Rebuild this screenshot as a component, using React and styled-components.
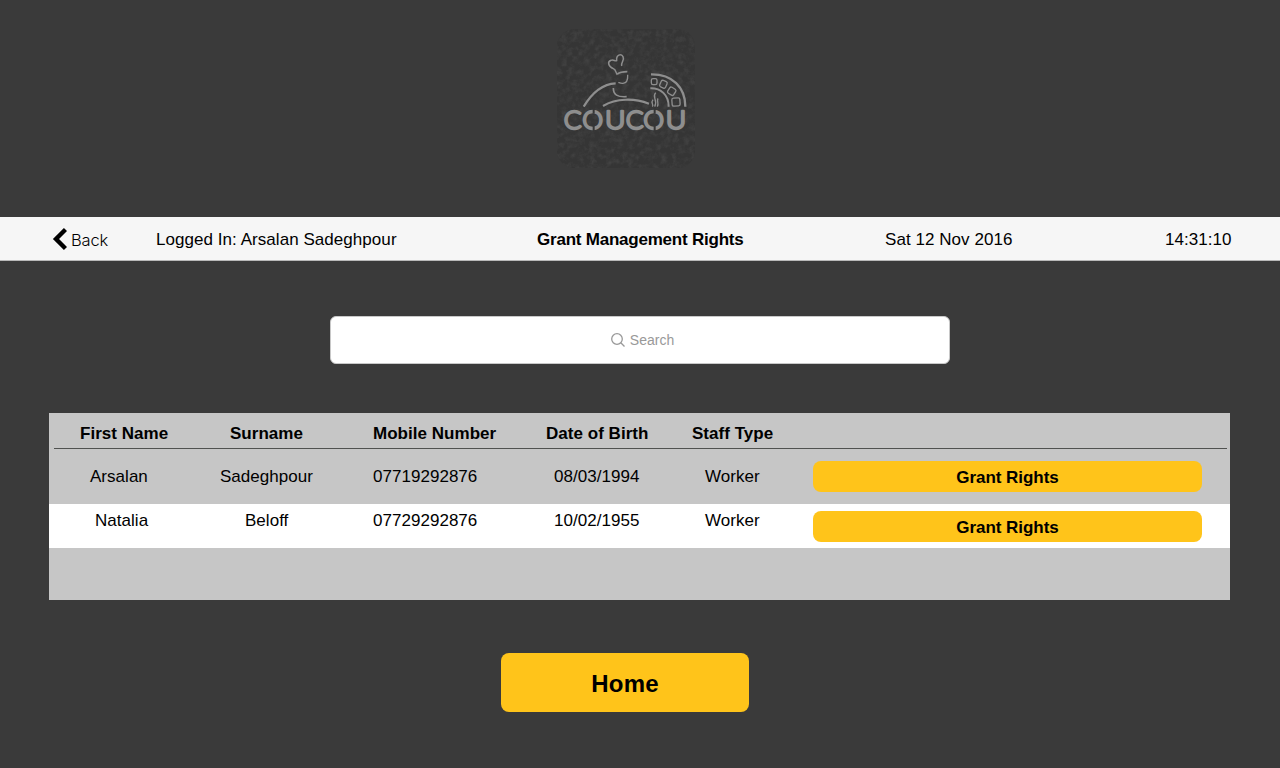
import React from "react";
import styled, { createGlobalStyle } from "styled-components";

const GlobalStyle = createGlobalStyle`
  body { margin: 0; background: #3a3a3a; }
  * { box-sizing: border-box; }
`;

const Page = styled.div`
  width: 1280px;
  height: 768px;
  overflow: hidden;
  display: flex;
  flex-direction: column;
  background: #3a3a3a;
  color: #000;
  font-family: "Liberation Sans", Arial, sans-serif;
  font-size: 17px;
  line-height: 20px;
  white-space: nowrap;
`;

const Banner = styled.header`
  height: 217px;
  padding: 20px 0 0 545px;
`;

const LogoImage = styled.svg`
  display: block;
  width: 160px;
  height: 160px;
`;

const NavBar = styled.nav`
  flex: none;
  height: 44px;
  display: grid;
  grid-template-columns: 104px 381px 348px 280px auto;
  align-items: center;
  padding-left: 52px;
  background: #f6f6f6;
  border-bottom: 1px solid #b9b9b9;
`;

const BackButton = styled.a`
  display: flex;
  align-items: center;
  gap: 4px;
  font-family: Inter, sans-serif;
  font-weight: 300;
  font-size: 16.5px;
  letter-spacing: -0.2px;
  padding-top: 2px;
`;

const BackIcon = styled.svg`
  width: 15px;
  height: 24px;
  margin-top: -2px;
`;

const NavText = styled.span`
  padding-top: 2px;
  font-weight: ${(p) => (p.$bold ? 700 : 400)};
  letter-spacing: ${(p) => (p.$bold ? "-0.22px" : "0.05px")};
`;

const SearchBox = styled.div`
  flex: none;
  width: 620px;
  height: 48px;
  margin: 55px 0 0 330px;
  display: flex;
  align-items: center;
  justify-content: center;
  gap: 4px;
  padding-left: 4px;
  background: #fff;
  border: 1px solid #c8c8c8;
  border-radius: 6px;
  color: #999;
  font-size: 14px;
`;

const SearchIcon = styled.svg`
  width: 16px;
  height: 16px;
`;

const Table = styled.section`
  flex: none;
  width: 1181px;
  height: 187px;
  margin: 49px 0 0 49px;
  background: #c6c6c6;
`;

const Row = styled.div`
  display: grid;
  grid-template-columns: 140px 153px 173px 146px 122px 389px;
  align-items: start;
  height: ${(p) => p.$height}px;
  padding: ${(p) => p.$top}px 0 0 30px;
  background: ${(p) => (p.$white ? "#fff" : "transparent")};
`;

const HeaderRow = styled(Row)`
  margin: 0 3px 0 5px;
  padding-left: 25px;
  border-bottom: 1px solid #505250;
  font-weight: 700;
`;

const Cell = styled.span`
  padding-left: ${(p) => p.$indent || 0}px;
  letter-spacing: 0.03px;
`;

const GrantButton = styled.button`
  height: 31px;
  margin-top: ${(p) => p.$shift}px;
  padding: 3px 0 0;
  border: 0;
  border-radius: 8px;
  background: #ffc41a;
  color: #000;
  font: 700 17px/20px "Liberation Sans", Arial, sans-serif;
  letter-spacing: -0.05px;
`;

const HomeButton = styled.button`
  flex: none;
  width: 248px;
  height: 59px;
  margin: 53px 0 0 501px;
  padding: 2px 0 0;
  border: 0;
  border-radius: 8px;
  background: #ffc41a;
  color: #000;
  font: 700 24px/28px "Liberation Sans", Arial, sans-serif;
  letter-spacing: 0.2px;
`;

const headings = [
  ["First Name", 1],
  ["Surname", 11],
  ["Mobile Number", 1],
  ["Date of Birth", 1],
  ["Staff Type", 1],
];

const staff = [
  {
    height: 55, top: 18, shift: -6, white: false,
    cells: [["Arsalan", 11], ["Sadeghpour", 1], ["07719292876", 1], ["08/03/1994", 9], ["Worker", 14]],
  },
  {
    height: 44, top: 7, shift: 0, white: true,
    cells: [["Natalia", 16], ["Beloff", 26], ["07729292876", 1], ["10/02/1955", 9], ["Worker", 14]],
  },
];

function Logo() {
  return (
    <LogoImage viewBox="0 0 480 480" role="img" aria-label="Coucou">
      <defs>
        <filter id="chalk" x="0" y="0" width="1" height="1" colorInterpolationFilters="sRGB">
          <feTurbulence type="fractalNoise" baseFrequency="0.06" numOctaves="5" seed="9" />
          <feColorMatrix values="0 0 0 0 0.6  0 0 0 0 0.6  0 0 0 0 0.6  0.22 0.14 0 0 -0.15" />
          <feComposite in2="SourceGraphic" operator="in" />
        </filter>
      </defs>
      <rect x="36" y="28" width="414" height="416" rx="52" fill="#353535" />
      <rect x="36" y="28" width="414" height="416" rx="52" fill="#fff" filter="url(#chalk)" />
      <g fill="none" stroke="#8e8e8e" strokeWidth="5" strokeLinecap="butt">
        <path d="M116 260C140 220 174 192 212 190" strokeWidth="6.5" />
        <path d="M174 258C214 234 268 234 312 251" strokeWidth="6.5" />
        <path d="M217 164C211 157 214 150 205 146C190 140 186 125 198 121C205 118 211 125 215 122C213 104 228 100 234 110C240 121 227 127 230 138" strokeWidth="4.5" />
        <path d="M217 162C226 155 236 155 247 155" />
        <path d="M248 164C249 181 246 189 234 190C227 191 223 188 220 187" strokeWidth="4" />
        <path d="M205 204C205 224 217 232 245 230" />
        <path d="M318 163C382 162 421 202 421 260" strokeWidth="7" />
        <path d="M316 205C347 204 371 224 371 260" strokeWidth="6" />
        <g strokeWidth="4">
          <rect x="319" y="176" width="17" height="18" rx="5" />
          <rect x="346" y="182" width="19" height="21" rx="5" transform="rotate(24 355 192)" />
          <rect x="370" y="203" width="21" height="21" rx="5" transform="rotate(32 380 213)" />
          <rect x="381" y="234" width="24" height="24" rx="5" transform="rotate(-4 393 246)" />
        </g>
        <path d="M332 218C319 233 340 238 329 260M324 239C315 250 328 253 322 260M339 235C334 244 343 249 337 260" strokeWidth="4" />
      </g>
      <g fill="#8e8e8e" stroke="#8e8e8e" strokeWidth="7" strokeLinejoin="round" fontFamily="Lato, sans-serif" fontWeight="300" fontSize="79">
        <text y="326" x="56 112">CO</text>
        <text transform="translate(180 326) scale(1.07 1)">U</text>
        <text y="326" x="242 295">CO</text>
        <text transform="translate(362 326) scale(1.07 1)">U</text>
      </g>
      <path d="M146 261V281M146 314V336M329 261V281M329 314V336" stroke="#363636" strokeWidth="6" />
    </LogoImage>
  );
}

export default function App() {
  return (
    <Page>
      <GlobalStyle />
      <Banner>
        <Logo />
      </Banner>
      <NavBar>
        <BackButton>
          <BackIcon viewBox="0 0 15 24">
            <path d="M13.5 2.5L4 12L13.5 21.5" fill="none" stroke="#000" strokeWidth="4.4" />
          </BackIcon>
          Back
        </BackButton>
        <NavText>Logged In: Arsalan Sadeghpour</NavText>
        <NavText $bold>Grant Management Rights</NavText>
        <NavText>Sat 12 Nov 2016</NavText>
        <NavText>14:31:10</NavText>
      </NavBar>
      <SearchBox>
        <SearchIcon viewBox="0 0 16 16" fill="none" stroke="#999" strokeWidth="1.3">
          <circle cx="7" cy="7" r="5.3" />
          <path d="M10.8 10.8L14.5 14.5" />
        </SearchIcon>
        Search
      </SearchBox>
      <Table>
        <HeaderRow $height={36} $top={11}>
          {headings.map(([label, indent]) => (
            <Cell key={label} $indent={indent}>{label}</Cell>
          ))}
        </HeaderRow>
        {staff.map((person) => (
          <Row key={person.cells[0][0]} $height={person.height} $top={person.top} $white={person.white}>
            {person.cells.map(([value, indent]) => (
              <Cell key={value} $indent={indent}>{value}</Cell>
            ))}
            <GrantButton $shift={person.shift}>Grant Rights</GrantButton>
          </Row>
        ))}
      </Table>
      <HomeButton>Home</HomeButton>
    </Page>
  );
}
